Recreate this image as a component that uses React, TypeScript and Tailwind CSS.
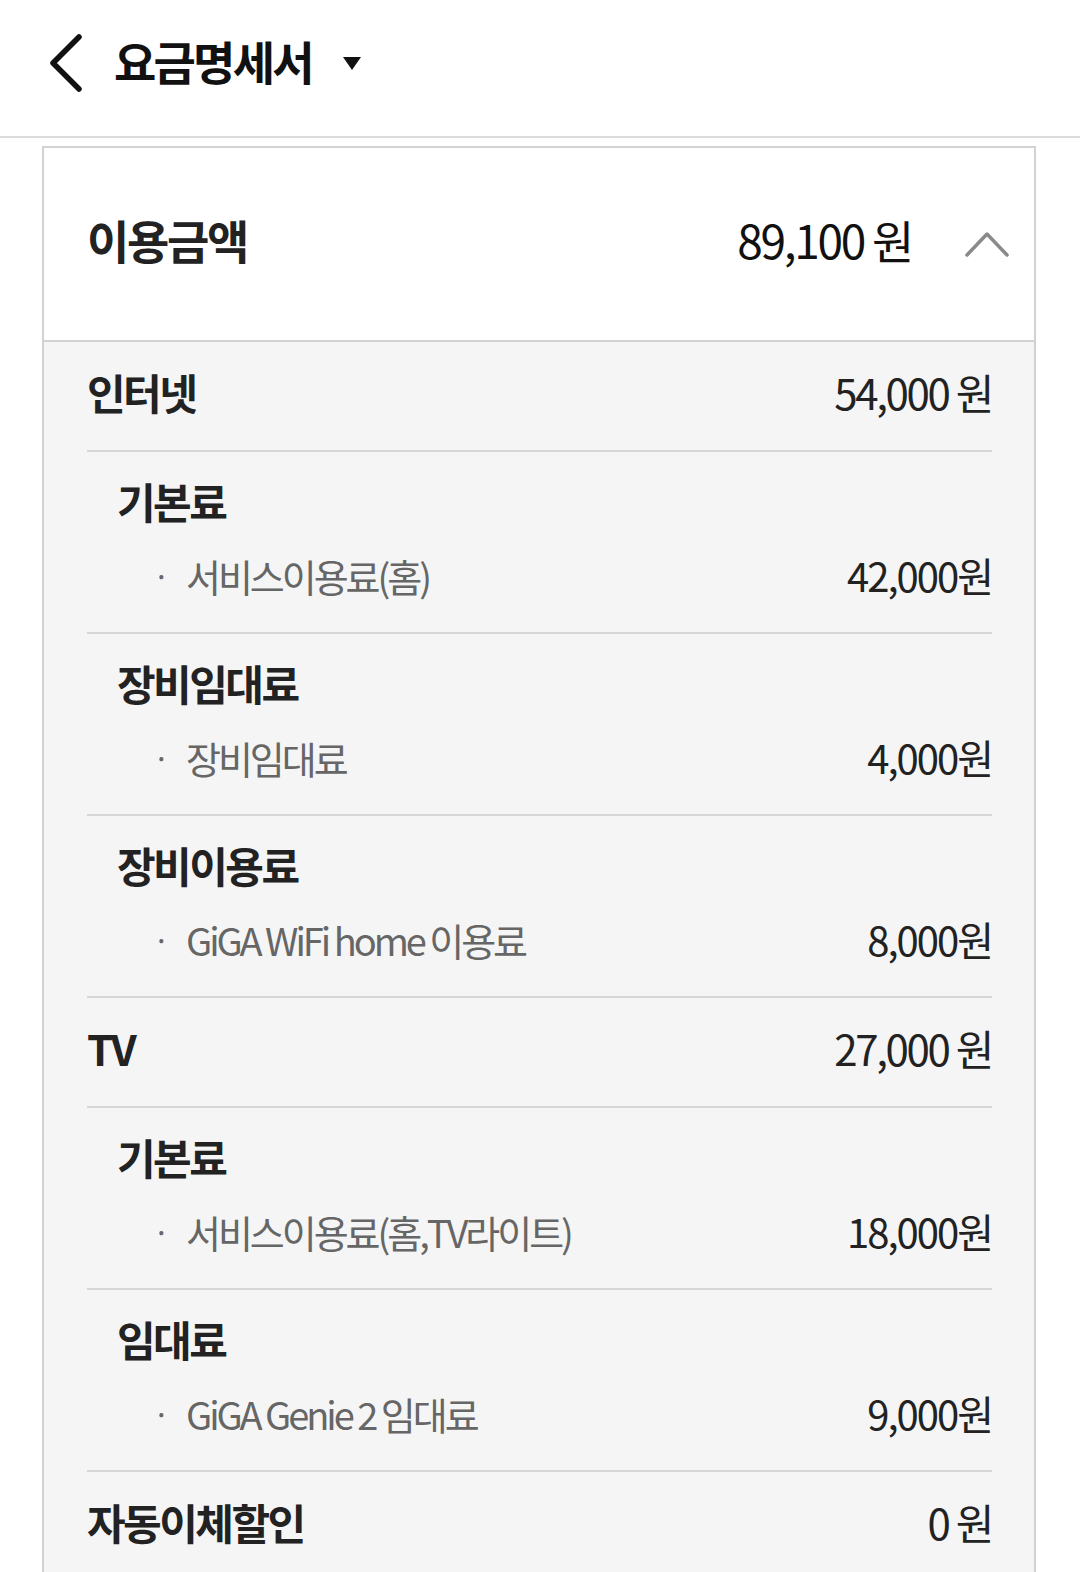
import React from "react";

const font = { fontFamily: '"Noto Sans CJK KR", "Noto Sans", sans-serif' };

type Item = { name: string; amount: string };
type Sub = { title: string; items: Item[] };

function CategoryRow({ title, amount }: { title: string; amount: string }) {
  return (
    <div className="flex h-[108px] items-center justify-between">
      <span className="mb-[10px] text-[42px] font-bold tracking-[-0.06em] text-[#222]">{title}</span>
      <span className="mb-[10px] text-[42px] tracking-[-0.055em] text-[#222]">{amount}</span>
    </div>
  );
}

function Divider() {
  return <div className="h-[2px] bg-[#d6d6d6]" />;
}

function SubSection({ sub }: { sub: Sub }) {
  return (
    <div className="pt-[24px] pb-[33px] pl-[30px]">
      <div className="flex h-[48px] items-center">
        <span className="text-[42px] font-bold tracking-[-0.06em] text-[#222]">{sub.title}</span>
      </div>
      {sub.items.map((it) => (
        <div key={it.name} className="mt-[27px] flex h-[48px] items-center justify-between">
          <div className="flex items-center">
            <span className="ml-[36px] w-[33px] text-[30px] text-[#666]">·</span>
            <span className="text-[38px] tracking-[-0.08em] text-[#666]">{it.name}</span>
          </div>
          <span className="text-[40px] tracking-[-0.05em] text-[#222]">{it.amount}</span>
        </div>
      ))}
    </div>
  );
}

export default function App() {
  const internet: Sub[] = [
    { title: "기본료", items: [{ name: "서비스이용료(홈)", amount: "42,000원" }] },
    { title: "장비임대료", items: [{ name: "장비임대료", amount: "4,000원" }] },
    { title: "장비이용료", items: [{ name: "GiGA WiFi home 이용료", amount: "8,000원" }] },
  ];
  const tv: Sub[] = [
    { title: "기본료", items: [{ name: "서비스이용료(홈,TV라이트)", amount: "18,000원" }] },
    { title: "임대료", items: [{ name: "GiGA Genie 2 임대료", amount: "9,000원" }] },
  ];
  return (
    <div className="h-[1572px] w-[1080px] overflow-hidden bg-white" style={font}>
      <header className="flex h-[138px] items-center border-b-2 border-[#dcdcdc] pb-[10px]">
        <svg width="40" height="60" viewBox="0 0 40 60" className="ml-[45px]">
          <path d="M34 4 L8 30 L34 56" fill="none" stroke="#111" strokeWidth="5.5" strokeLinecap="round" strokeLinejoin="round" />
        </svg>
        <h1 className="mb-[6px] ml-[29px] text-[46px] font-bold tracking-[-0.06em] text-[#111]">요금명세서</h1>
        <svg width="20" height="16" viewBox="0 0 20 16" className="ml-[30px]">
          <path d="M1 2 L19 2 L10 15 Z" fill="#111" />
        </svg>
      </header>
      <div className="ml-[42px] mr-[44px] mt-[8px] border-2 border-[#d2d2d2]">
        <div className="flex h-[194px] items-center justify-between border-b-2 border-[#d2d2d2] bg-white pl-[43px] pr-[24px]">
          <span className="mb-[10px] text-[46px] font-bold tracking-[-0.05em] text-[#222]">이용금액</span>
          <div className="flex items-center">
            <span className="mb-[10px] text-[46px] tracking-[-0.05em] text-[#111]">89,100 원</span>
            <svg width="46" height="30" viewBox="0 0 46 30" className="ml-[52px]">
              <path d="M3 26 L23 5 L43 26" fill="none" stroke="#8a8a8a" strokeWidth="3.5" strokeLinecap="round" strokeLinejoin="round" />
            </svg>
          </div>
        </div>
        <div className="bg-[#f5f5f5] pl-[43px] pr-[42px] pb-[200px]">
          <CategoryRow title="인터넷" amount="54,000 원" />
          {internet.map((s) => (
            <React.Fragment key={s.title}>
              <Divider />
              <SubSection sub={s} />
            </React.Fragment>
          ))}
          <Divider />
          <CategoryRow title="TV" amount="27,000 원" />
          {tv.map((s) => (
            <React.Fragment key={s.title + "tv"}>
              <Divider />
              <SubSection sub={s} />
            </React.Fragment>
          ))}
          <Divider />
          <CategoryRow title="자동이체할인" amount="0 원" />
        </div>
      </div>
    </div>
  );
}
